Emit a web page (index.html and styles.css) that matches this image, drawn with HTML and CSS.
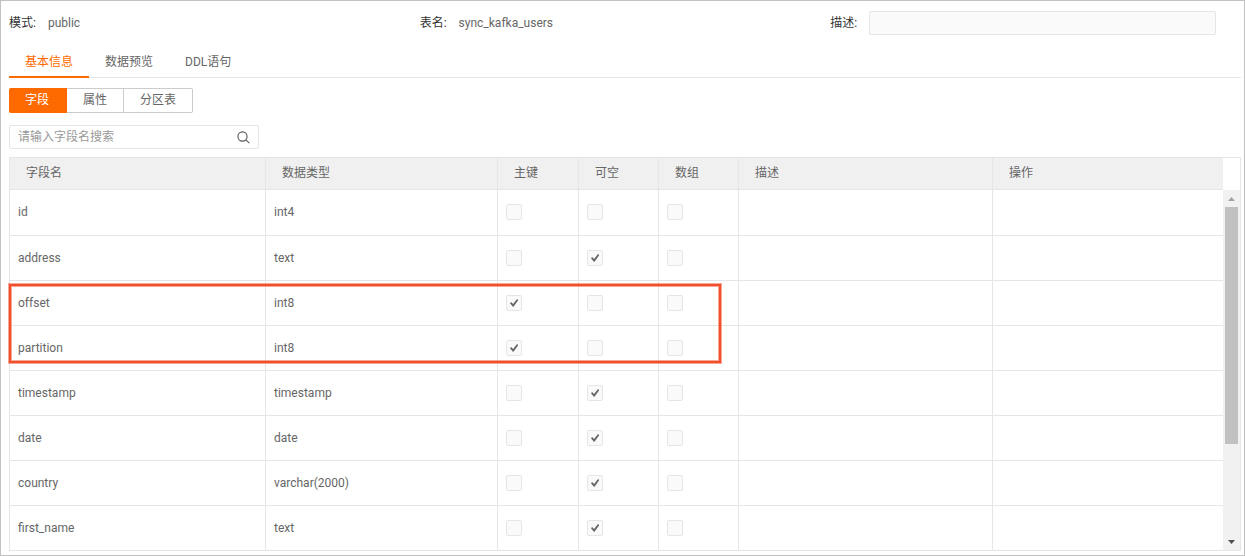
FILE: index.html
```html
<!DOCTYPE html>
<html lang="zh-CN">
<head>
<meta charset="utf-8">
<title>sync_kafka_users</title>
<link rel="stylesheet" href="styles.css">
</head>
<body>
<main class="panel">
  <section class="meta">
    <div class="meta-item"><span class="meta-label">模式:</span><span>public</span></div>
    <div class="meta-item"><span class="meta-label">表名:</span><span>sync_kafka_users</span></div>
    <div class="meta-item meta-item-wide"><label class="meta-label" for="desc">描述:</label><input class="meta-input" id="desc" type="text" disabled></div>
  </section>

  <nav class="tabs" role="tablist">
    <button class="tab tab-active" role="tab" aria-selected="true">基本信息</button>
    <button class="tab" role="tab">数据预览</button>
    <button class="tab" role="tab">DDL语句</button>
  </nav>

  <div class="segments">
    <button class="segment segment-active">字段</button>
    <button class="segment">属性</button>
    <button class="segment">分区表</button>
  </div>

  <div class="search">
    <input class="search-input" type="text" placeholder="请输入字段名搜索" aria-label="请输入字段名搜索">
    <button class="search-button" aria-label="搜索">
      <svg width="13" height="13" viewBox="0 0 13 13" fill="none" stroke="#555" stroke-width="1.1"><circle cx="5.5" cy="5.5" r="4.6"/><path d="M8.8 8.8L12.4 12.2"/></svg>
    </button>
  </div>

  <div class="grid">
    <table class="fields">
      <colgroup><col class="col-name"><col class="col-type"><col class="col-key"><col class="col-flag"><col class="col-flag"><col class="col-desc"><col></colgroup>
      <thead>
        <tr><th>字段名</th><th>数据类型</th><th>主键</th><th>可空</th><th>数组</th><th>描述</th><th>操作</th></tr>
      </thead>
      <tbody>
        <tr><td>id</td><td>int4</td><td><input class="check" type="checkbox" aria-label="主键" disabled></td><td><input class="check" type="checkbox" aria-label="可空" disabled></td><td><input class="check" type="checkbox" aria-label="数组" disabled></td><td></td><td></td></tr>
        <tr><td>address</td><td>text</td><td><input class="check" type="checkbox" aria-label="主键" disabled></td><td><input class="check" type="checkbox" aria-label="可空" checked disabled></td><td><input class="check" type="checkbox" aria-label="数组" disabled></td><td></td><td></td></tr>
        <tr><td>offset</td><td>int8</td><td><input class="check" type="checkbox" aria-label="主键" checked disabled></td><td><input class="check" type="checkbox" aria-label="可空" disabled></td><td><input class="check" type="checkbox" aria-label="数组" disabled></td><td></td><td></td></tr>
        <tr><td>partition</td><td>int8</td><td><input class="check" type="checkbox" aria-label="主键" checked disabled></td><td><input class="check" type="checkbox" aria-label="可空" disabled></td><td><input class="check" type="checkbox" aria-label="数组" disabled></td><td></td><td></td></tr>
        <tr><td>timestamp</td><td>timestamp</td><td><input class="check" type="checkbox" aria-label="主键" disabled></td><td><input class="check" type="checkbox" aria-label="可空" checked disabled></td><td><input class="check" type="checkbox" aria-label="数组" disabled></td><td></td><td></td></tr>
        <tr><td>date</td><td>date</td><td><input class="check" type="checkbox" aria-label="主键" disabled></td><td><input class="check" type="checkbox" aria-label="可空" checked disabled></td><td><input class="check" type="checkbox" aria-label="数组" disabled></td><td></td><td></td></tr>
        <tr><td>country</td><td>varchar(2000)</td><td><input class="check" type="checkbox" aria-label="主键" disabled></td><td><input class="check" type="checkbox" aria-label="可空" checked disabled></td><td><input class="check" type="checkbox" aria-label="数组" disabled></td><td></td><td></td></tr>
        <tr><td>first_name</td><td>text</td><td><input class="check" type="checkbox" aria-label="主键" disabled></td><td><input class="check" type="checkbox" aria-label="可空" checked disabled></td><td><input class="check" type="checkbox" aria-label="数组" disabled></td><td></td><td></td></tr>
      </tbody>
    </table>
    <div class="scrollbar" aria-hidden="true">
      <div class="arrow"><svg width="7" height="4" viewBox="0 0 7 4"><path fill="#a3a3a3" d="M0 4L3.5 0L7 4z"/></svg></div>
      <div class="thumb"></div>
      <div class="track"></div>
      <div class="arrow"><svg width="7" height="4" viewBox="0 0 7 4"><path fill="#505050" d="M0 0L3.5 4L7 0z"/></svg></div>
    </div>
    <div class="highlight"></div>
  </div>
</main>
</body>
</html>
```

FILE: styles.css
```css
* { box-sizing: border-box; }

body {
  margin: 0;
  background: #fff;
  color: #666;
  font: 12px/16px Roboto, "Noto Sans CJK SC", sans-serif;
}

button, input {
  margin: 0;
  padding: 0;
  border: 0;
  background: none;
  color: inherit;
  font: inherit;
}

.panel {
  padding: 10px 3px 4px 8px;
  border: 1px solid #c1c1c1;
}

.meta {
  display: grid;
  grid-template-columns: repeat(3, 1fr);
}

.meta-item {
  display: flex;
  align-items: center;
  gap: 12px;
  height: 24px;
}

.meta-item-wide { padding-right: 25px; }

.meta-label { color: #333; }

.meta-input {
  flex: 1;
  min-width: 0;
  height: 24px;
  padding: 0 8px;
  border: 1px solid #e6e6e6;
  border-radius: 2px;
  background: #fafafa;
}

.tabs {
  display: flex;
  margin-top: 11px;
  border-bottom: 1px solid #e6e6e6;
}

.tab {
  height: 32px;
  margin-bottom: -1px;
  padding: 2px 16px 0;
  border-bottom: 2px solid transparent;
}

.tab-active {
  border-color: #ff6a00;
  color: #ff6a00;
}

.segments {
  display: flex;
  margin-top: 10px;
}

.segment {
  height: 25px;
  padding: 0 16px 1px;
  border: 1px solid #ccc;
  border-left: 0;
}

.segment:last-child { border-radius: 0 2px 2px 0; }

.segment-active {
  padding: 0 17px 1px 16px;
  border-color: #ff6a00;
  border-radius: 2px 0 0 2px;
  background: #ff6a00;
  color: #fff;
}

.search {
  display: flex;
  align-items: center;
  width: 250px;
  height: 24px;
  margin-top: 12px;
  padding: 0 8px;
  border: 1px solid #e6e6e6;
  border-radius: 2px;
}

.search-input {
  flex: 1;
  min-width: 0;
}

.search-input::placeholder {
  color: #999;
  opacity: 1;
}

.search-button { display: flex; }

.grid {
  display: flex;
  position: relative;
  margin-top: 8px;
  border: 1px solid #e6e6e6;
}

.fields {
  flex: 1;
  width: 0;
  table-layout: fixed;
  border-collapse: separate;
  border-spacing: 0;
}

.col-name { width: 256px; }
.col-type { width: 232px; }
.col-key { width: 81px; }
.col-flag { width: 80px; }
.col-desc { width: 254px; }

th, td {
  padding: 0 8px;
  border: 0 solid #e6e6e6;
  border-width: 0 1px 1px 0;
  text-align: left;
}

th {
  height: 32px;
  padding: 0 16px 2px;
  background: #f0f0f0;
  font-weight: normal;
}

td { height: 45px; }
th:last-child, td:last-child { border-right: 0; }
tbody tr:first-child td { height: 46px; padding-bottom: 1px; }
tbody tr:last-child td { height: 44px; border-bottom: 0; }

.check {
  display: block;
  appearance: none;
  width: 16px;
  height: 16px;
  padding: 3px;
  border: 1px solid #e6e6e6;
  border-radius: 2px;
  background: #fafafa;
}

.check:checked::before {
  content: "";
  display: block;
  height: 8px;
  background: #666;
  clip-path: polygon(0 54%, 14% 38%, 38% 62%, 86% 4%, 100% 6%, 100% 20%, 44% 98%, 36% 98%);
}

.scrollbar {
  display: flex;
  flex-direction: column;
  width: 17px;
  margin-top: 32px;
  background: #f1f1f1;
}

.arrow {
  display: flex;
  align-items: center;
  justify-content: center;
  height: 17px;
}

.thumb {
  flex: 237;
  margin: 0 2px;
  background: #c1c1c1;
}

.track { flex: 89; }

.highlight {
  position: absolute;
  top: 126px;
  left: 0;
  width: 712px;
  height: 79px;
  margin-left: -1px;
  border: 2px solid #f2502c;
  box-shadow: 0 0 0 1px #f2502c80, inset 0 0 0 1px #f2502c80;
}
```
